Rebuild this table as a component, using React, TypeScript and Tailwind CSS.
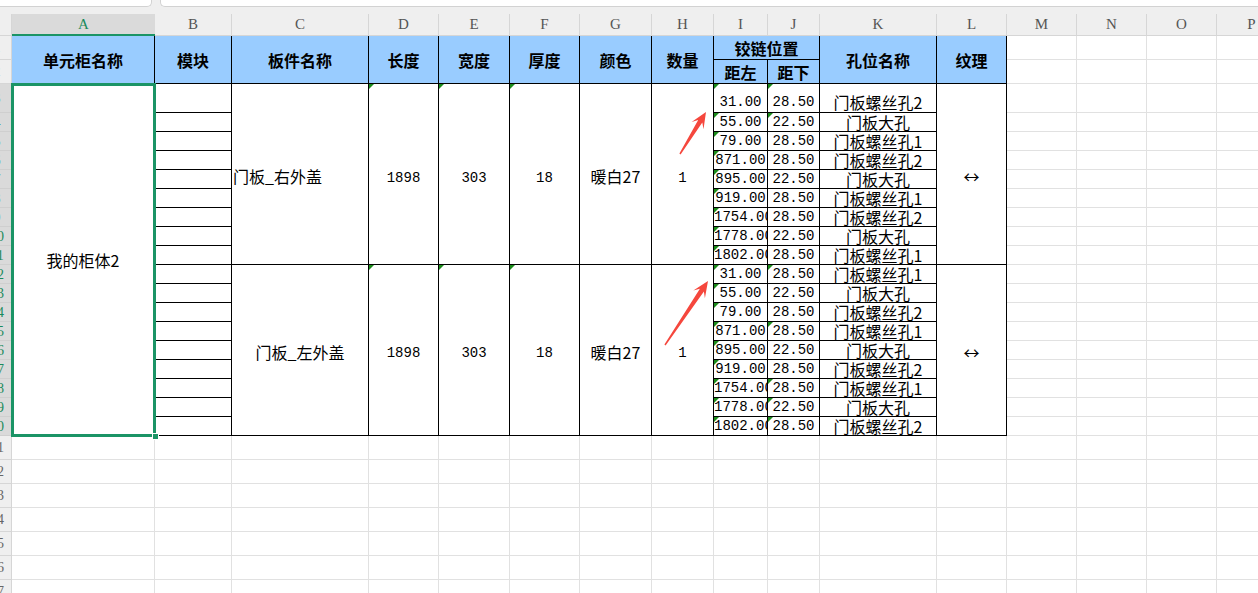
import type { ReactNode } from 'react';

const cjk = "font-['Noto_Sans_CJK_SC','Noto_Sans',sans-serif]";
const mono = "font-['Liberation_Mono',monospace]";
const serif = "font-['Liberation_Serif',serif]";
const line = 'border-r border-b border-black';
const grid = 'border-r border-b border-[#e1e1e1]';

const block1 = [
  ['31.00', '28.50', '门板螺丝孔2'],
  ['55.00', '22.50', '门板大孔'],
  ['79.00', '28.50', '门板螺丝孔1'],
  ['871.00', '28.50', '门板螺丝孔2'],
  ['895.00', '22.50', '门板大孔'],
  ['919.00', '28.50', '门板螺丝孔1'],
  ['1754.00', '28.50', '门板螺丝孔2'],
  ['1778.00', '22.50', '门板大孔'],
  ['1802.00', '28.50', '门板螺丝孔1'],
];

const block2 = [
  ['31.00', '28.50', '门板螺丝孔1'],
  ['55.00', '22.50', '门板大孔'],
  ['79.00', '28.50', '门板螺丝孔2'],
  ['871.00', '28.50', '门板螺丝孔1'],
  ['895.00', '22.50', '门板大孔'],
  ['919.00', '28.50', '门板螺丝孔2'],
  ['1754.00', '28.50', '门板螺丝孔1'],
  ['1778.00', '22.50', '门板大孔'],
  ['1802.00', '28.50', '门板螺丝孔2'],
];

const rows = [...block1, ...block2];
// rows (0-based within the 18 data rows) that carry the green "text number" flag in J
const jFlags = [0, 1, 9, 12, 15, 16, 17];

const cols = [
  { id: 'A', w: 'w-[143px]' },
  { id: 'B', w: 'w-[77px]' },
  { id: 'C', w: 'w-[137px]' },
  { id: 'D', w: 'w-[70px]' },
  { id: 'E', w: 'w-[71px]' },
  { id: 'F', w: 'w-[70px]' },
  { id: 'G', w: 'w-[72px]' },
  { id: 'H', w: 'w-[62px]' },
  { id: 'I', w: 'w-[54px]' },
  { id: 'J', w: 'w-[52px]' },
  { id: 'K', w: 'w-[117px]' },
  { id: 'L', w: 'w-[70px]' },
  { id: 'M', w: 'w-[70px]' },
  { id: 'N', w: 'w-[70px]' },
  { id: 'O', w: 'w-[70px]' },
  { id: 'P', w: 'w-[70px]' },
];

const rowNums = [
  { n: 1, h: 'h-[24px]', sel: false },
  { n: 2, h: 'h-[24px]', sel: false },
  { n: 3, h: 'h-[29px]', sel: true },
  ...Array.from({ length: 17 }, (_, i) => ({ n: i + 4, h: 'h-[19px]', sel: true })),
  ...Array.from({ length: 7 }, (_, i) => ({ n: i + 21, h: 'h-[24px]', sel: false })),
];

function rowH(i: number) {
  return i === 0 ? 'h-[29px] items-end pb-[1px]' : 'h-[19px] items-center';
}

function Mark() {
  return (
    <span className="absolute left-0 top-0 h-0 w-0 border-t-[5px] border-r-[5px] border-t-[#1c8c1c] border-r-transparent" />
  );
}

function Tail() {
  return (
    <>
      {Array.from({ length: 7 }).map((_, i) => (
        <div key={i} className={`h-[24px] shrink-0 ${grid}`} />
      ))}
    </>
  );
}

function Head({ children }: { children: ReactNode }) {
  return (
    <div className={`h-[48px] shrink-0 ${line} flex items-center justify-center bg-[#99ccff] text-[16px] font-bold`}>
      {children}
    </div>
  );
}

function Column({ w, children }: { w: string; children: ReactNode }) {
  return <div className={`${w} shrink-0 flex flex-col`}>{children}</div>;
}

// one value per block, merged over its 9 rows
function Merged({ a, b, mark, numeric }: { a: string; b: string; mark?: boolean; numeric?: boolean }) {
  const font = numeric ? `${mono} text-[14px]` : 'text-[16px]';
  return (
    <>
      <div
        className={`relative h-[181px] shrink-0 ${line} flex items-center justify-center ${
          numeric ? 'pt-[8px]' : 'pt-[3px]'
        } ${font}`}
      >
        {mark && <Mark />}
        {a}
      </div>
      <div
        className={`relative h-[171px] shrink-0 ${line} flex items-center justify-center ${
          numeric ? 'pt-[7px]' : 'pt-[4px]'
        } ${font}`}
      >
        {mark && <Mark />}
        {b}
      </div>
    </>
  );
}

function Arrow({ tail, tip }: { tail: [number, number]; tip: [number, number] }) {
  const dx = tip[0] - tail[0];
  const dy = tip[1] - tail[1];
  const len = Math.hypot(dx, dy);
  const ux = dx / len;
  const uy = dy / len;
  const nx = -uy;
  const ny = ux;
  const at = (back: number, side: number) =>
    `${(tip[0] - ux * back + nx * side).toFixed(1)},${(tip[1] - uy * back + ny * side).toFixed(1)}`;
  const pts = [
    at(len, 0.7),
    at(11, 2.4),
    at(16, 7),
    at(0, 0),
    at(16, -7),
    at(11, -2.4),
    at(len, -0.7),
  ].join(' ');
  return <polygon points={pts} fill="#f5473d" />;
}

export default function App() {
  return (
    <div className={`relative w-[1258px] h-[593px] overflow-hidden bg-white text-black ${cjk}`}>
      {/* tab strip */}
      <div className="h-[14px] bg-[#efefef]">
        <div className="flex h-[7px]">
          <div className="w-[152px] bg-white border-b border-r border-[#d2d2d2] rounded-br-[5px]" />
          <div className="w-[8px]" />
          <div className="flex-1 bg-white border-b border-l border-[#d2d2d2] rounded-bl-[5px]" />
        </div>
      </div>

      {/* column letters */}
      <div className={`flex h-[22px] bg-[#efefef] ${serif} text-[15px]`}>
        <div className="w-[12px] shrink-0 border-r border-b border-[#d6d6d6]" />
        {cols.map((c) =>
          c.id === 'A' ? (
            <div
              key={c.id}
              className={`${c.w} shrink-0 flex items-center justify-center bg-[#dadada] border-b-2 border-[#1b9466] text-[#1b8a5c]`}
            >
              {c.id}
            </div>
          ) : (
            <div
              key={c.id}
              className={`${c.w} shrink-0 flex items-center justify-center border-r border-b border-[#d6d6d6] text-[#555]`}
            >
              {c.id}
            </div>
          ),
        )}
      </div>

      <div className="flex">
        {/* row numbers, scrolled so only the last digit peeks out */}
        <div className={`w-[12px] shrink-0 overflow-hidden flex flex-col ${serif} text-[14px]`}>
          {rowNums.map((r) => (
            <div
              key={r.n}
              className={`${r.h} shrink-0 flex items-center border-r border-b ${
                r.sel ? 'bg-[#dadada] border-[#cfcfcf] text-[#1b8a5c]' : 'bg-[#efefef] border-[#d6d6d6] text-[#666]'
              }`}
            >
              <div className="w-[30px] -ml-[18px] shrink-0 text-center">{r.n}</div>
            </div>
          ))}
        </div>

        {/* A */}
        <Column w="w-[143px]">
          <Head>单元柜名称</Head>
          <div className={`relative h-[352px] shrink-0 ${line} flex items-center justify-center text-[16px]`}>
            我的柜体2
            <div className="absolute -left-[1px] -top-[1px] -right-[2px] -bottom-[2px] border-[3px] border-[#1b9466] z-10" />
            <div className="absolute -right-[5px] -bottom-[5px] w-[7px] h-[7px] bg-[#1b9466] border border-white z-20" />
          </div>
          <Tail />
        </Column>

        {/* B */}
        <Column w="w-[77px]">
          <Head>模块</Head>
          {rows.map((_, i) => (
            <div key={i} className={`${i === 0 ? 'h-[29px]' : 'h-[19px]'} shrink-0 ${line}`} />
          ))}
          <Tail />
        </Column>

        {/* C */}
        <Column w="w-[137px]">
          <Head>板件名称</Head>
          <div className={`h-[181px] shrink-0 ${line} flex items-center justify-start pl-[1px] pt-[3px] text-[16px]`}>
            门板_右外盖
          </div>
          <div className={`h-[171px] shrink-0 ${line} flex items-center justify-center pt-[4px] text-[16px]`}>
            门板_左外盖
          </div>
          <Tail />
        </Column>

        <Column w="w-[70px]">
          <Head>长度</Head>
          <Merged a="1898" b="1898" mark numeric />
          <Tail />
        </Column>
        <Column w="w-[71px]">
          <Head>宽度</Head>
          <Merged a="303" b="303" mark numeric />
          <Tail />
        </Column>
        <Column w="w-[70px]">
          <Head>厚度</Head>
          <Merged a="18" b="18" mark numeric />
          <Tail />
        </Column>
        <Column w="w-[72px]">
          <Head>颜色</Head>
          <Merged a="暖白27" b="暖白27" />
          <Tail />
        </Column>
        <Column w="w-[62px]">
          <Head>数量</Head>
          <Merged a="1" b="1" numeric />
          <Tail />
        </Column>

        {/* I + J under the merged hinge header */}
        <div className="w-[106px] shrink-0 flex flex-col">
          <div className={`h-[24px] shrink-0 ${line} flex items-center justify-center bg-[#99ccff] text-[16px] font-bold`}>
            铰链位置
          </div>
          <div className="flex">
            <Column w="w-[54px]">
              <div className={`h-[24px] shrink-0 ${line} flex items-end justify-center bg-[#99ccff] text-[16px] font-bold leading-[22px]`}>
                距左
              </div>
              {rows.map((r, i) => (
                <div
                  key={i}
                  className={`relative ${rowH(i)} shrink-0 ${line} flex overflow-hidden whitespace-nowrap ${mono} text-[14px] leading-[18px] ${
                    r[0].length > 6 ? 'justify-start' : 'justify-center'
                  }`}
                >
                  <Mark />
                  {r[0]}
                </div>
              ))}
              <Tail />
            </Column>
            <Column w="w-[52px]">
              <div className={`h-[24px] shrink-0 ${line} flex items-end justify-center bg-[#99ccff] text-[16px] font-bold leading-[22px]`}>
                距下
              </div>
              {rows.map((r, i) => (
                <div
                  key={i}
                  className={`relative ${rowH(i)} shrink-0 ${line} flex justify-center overflow-hidden whitespace-nowrap ${mono} text-[14px] leading-[18px]`}
                >
                  {jFlags.includes(i) && <Mark />}
                  {r[1]}
                </div>
              ))}
              <Tail />
            </Column>
          </div>
        </div>

        {/* K */}
        <Column w="w-[117px]">
          <Head>孔位名称</Head>
          {rows.map((r, i) => (
            <div
              key={i}
              className={`${rowH(i)} shrink-0 ${line} flex justify-center overflow-hidden whitespace-nowrap text-[16px] leading-[18px]`}
            >
              {r[2]}
            </div>
          ))}
          <Tail />
        </Column>

        {/* L */}
        <Column w="w-[70px]">
          <Head>纹理</Head>
          <Merged a="↔" b="↔" />
          <Tail />
        </Column>

        {/* M..P empty grid */}
        {['M', 'N', 'O', 'P'].map((id) => (
          <Column key={id} w="w-[70px]">
            <div className={`h-[24px] shrink-0 ${grid}`} />
            <div className={`h-[24px] shrink-0 ${grid}`} />
            {rows.map((_, i) => (
              <div key={i} className={`${i === 0 ? 'h-[29px]' : 'h-[19px]'} shrink-0 ${grid}`} />
            ))}
            <Tail />
          </Column>
        ))}
      </div>

      {/* red annotation arrows */}
      <svg className="absolute left-0 top-0 w-[1258px] h-[593px] pointer-events-none z-30" viewBox="0 0 1258 593">
        <Arrow tail={[680, 154]} tip={[706, 112]} />
        <Arrow tail={[665, 345]} tip={[708, 281]} />
      </svg>
    </div>
  );
}
